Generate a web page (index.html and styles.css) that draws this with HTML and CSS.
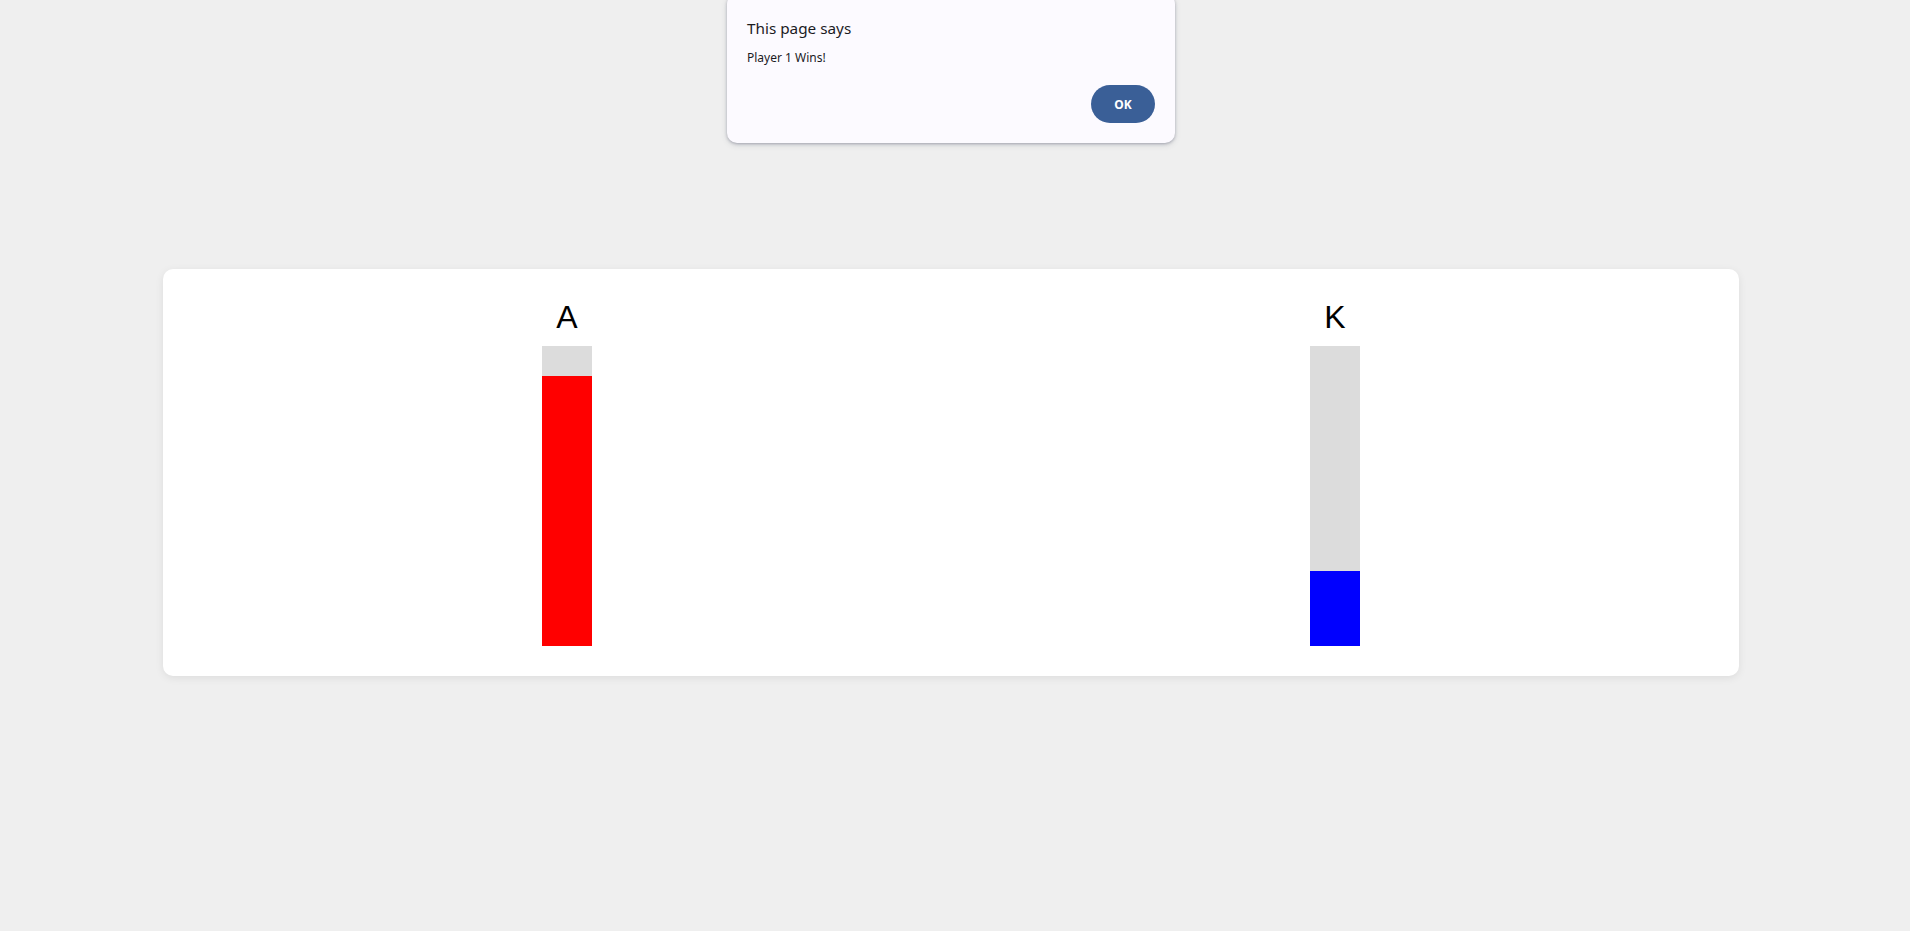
FILE: index.html
```html
<!DOCTYPE html>
<html>
<head>
<meta charset="utf-8">
<link rel="stylesheet" href="styles.css">
</head>
<body>
<div class="game">
  <div class="player">
    <div class="label">A</div>
    <div class="bar"><div class="fill red" style="height:90%"></div></div>
  </div>
  <div class="player">
    <div class="label">K</div>
    <div class="bar"><div class="fill blue" style="height:25%"></div></div>
  </div>
</div>
<div class="dialog">
  <div class="dtitle">This page says</div>
  <div class="dmsg">Player 1 Wins!</div>
  <div class="dactions"><button class="ok">OK</button></div>
</div>
</body>
</html>
```
FILE: styles.css
```css
html, body {
  margin: 0;
  padding: 0;
  background: #efefef;
  height: 100%;
  font-family: "Liberation Sans", Arial, sans-serif;
}
body {
  padding-top: 269px;
  box-sizing: border-box;
}
.game {
  margin-left: 163px;
  width: 1576px;
  box-sizing: border-box;
  height: 407px;
  background: #fff;
  border-radius: 10px;
  box-shadow: 0 2px 8px rgba(0,0,0,0.08);
  padding: 20px;
  display: flex;
  justify-content: space-around;
  align-items: flex-start;
}
.player {
  display: flex;
  flex-direction: column;
  align-items: center;
}
.label {
  font-size: 32px;
  line-height: 37px;
  margin: 10px 0;
  color: #000;
}
.bar {
  width: 50px;
  height: 300px;
  background: #dcdcdc;
  display: flex;
  flex-direction: column;
  justify-content: flex-end;
}
.fill { width: 100%; }
.red { background: #ff0000; }
.blue { background: #0000ff; }
.dialog {
  position: absolute;
  left: 727px;
  top: -6px;
  width: 448px;
  height: 149px;
  box-sizing: border-box;
  background: #fcfaff;
  border-radius: 10px;
  box-shadow: 0 1px 3px rgba(60,64,90,0.35), 0 2px 6px rgba(60,64,90,0.15);
  padding: 23px 20px 0 20px;
  font-family: "Noto Sans", "Open Sans", sans-serif;
  color: #1b1b1f;
}
.dtitle {
  font-size: 15.3px;
  line-height: 22px;
}
.dmsg {
  font-size: 12px;
  line-height: 18px;
  margin-top: 10px;
}
.dactions {
  display: flex;
  justify-content: flex-end;
  margin-top: 18px;
}
.ok {
  width: 64px;
  height: 38px;
  border: none;
  border-radius: 19px;
  background: #3a5f97;
  color: #fff;
  font-family: "Noto Sans", "Open Sans", sans-serif;
  font-weight: bold;
  font-size: 12px;
  padding: 0;
}
```
